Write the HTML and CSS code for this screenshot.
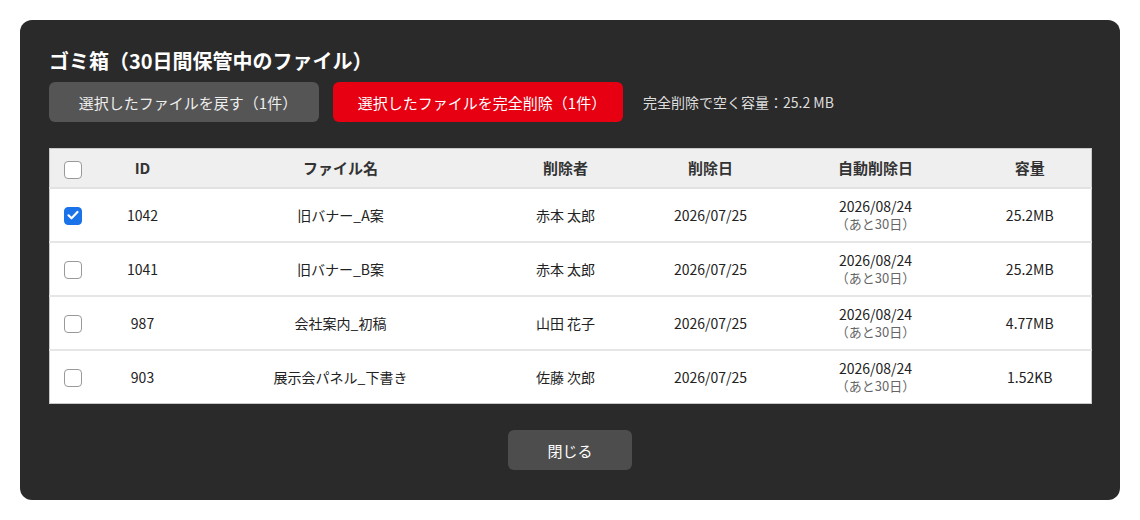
FILE: index.html
```html
<!DOCTYPE html>
<html lang="ja">
<head>
<meta charset="utf-8">
<link rel="stylesheet" href="styles.css">
</head>
<body>
<div class="panel">
  <h1 class="title">ゴミ箱（30日間保管中のファイル）</h1>
  <div class="actions">
    <button class="btn btn-restore">選択したファイルを戻す（1件）</button>
    <button class="btn btn-delete">選択したファイルを完全削除（1件）</button>
    <span class="free">完全削除で空く容量：25.2 MB</span>
  </div>
  <table class="grid">
    <colgroup>
      <col class="c-check"><col class="c-id"><col class="c-name"><col class="c-user"><col class="c-date"><col class="c-auto"><col class="c-size">
    </colgroup>
    <thead>
      <tr>
        <th><span class="cb"></span></th>
        <th>ID</th>
        <th>ファイル名</th>
        <th>削除者</th>
        <th>削除日</th>
        <th>自動削除日</th>
        <th>容量</th>
      </tr>
    </thead>
    <tbody>
      <tr>
        <td><span class="cb on"><svg viewBox="0 0 18 18" width="18" height="18"><path d="M4.5 9.3l3 3 6-6.3" fill="none" stroke="#fff" stroke-width="2.2" stroke-linecap="round" stroke-linejoin="round"/></svg></span></td>
        <td>1042</td>
        <td>旧バナー_A案</td>
        <td>赤本 太郎</td>
        <td>2026/07/25</td>
        <td><div class="d1">2026/08/24</div><div class="d2">（あと30日）</div></td>
        <td>25.2MB</td>
      </tr>
      <tr>
        <td><span class="cb"></span></td>
        <td>1041</td>
        <td>旧バナー_B案</td>
        <td>赤本 太郎</td>
        <td>2026/07/25</td>
        <td><div class="d1">2026/08/24</div><div class="d2">（あと30日）</div></td>
        <td>25.2MB</td>
      </tr>
      <tr>
        <td><span class="cb"></span></td>
        <td>987</td>
        <td>会社案内_初稿</td>
        <td>山田 花子</td>
        <td>2026/07/25</td>
        <td><div class="d1">2026/08/24</div><div class="d2">（あと30日）</div></td>
        <td>4.77MB</td>
      </tr>
      <tr>
        <td><span class="cb"></span></td>
        <td>903</td>
        <td>展示会パネル_下書き</td>
        <td>佐藤 次郎</td>
        <td>2026/07/25</td>
        <td><div class="d1">2026/08/24</div><div class="d2">（あと30日）</div></td>
        <td>1.52KB</td>
      </tr>
    </tbody>
  </table>
  <div class="footer">
    <button class="btn btn-close">閉じる</button>
  </div>
</div>
</body>
</html>
```
FILE: styles.css
```css
* { box-sizing: border-box; }
html, body { margin: 0; padding: 0; background: #fff; }
body {
  font-family: "Noto Sans CJK JP", "Noto Sans", sans-serif;
  padding: 20px;
}
.panel {
  width: 1100px;
  height: 480px;
  background: #2a2a2a;
  border-radius: 12px;
  padding: 26px 29px 30px 29px;
}
.title {
  margin: 0;
  color: #fff;
  font-size: 20px;
  font-weight: 700;
  line-height: 30px;
  height: 30px;
}
.actions {
  display: flex;
  align-items: center;
  margin-top: 6px;
  height: 40px;
}
.btn {
  font-family: inherit;
  border: none;
  border-radius: 6px;
  height: 40px;
  font-size: 15px;
  color: #fff;
  padding: 0;
  cursor: pointer;
}
.btn-restore { width: 270px; background: #555; color: #eee; padding-left: 8px; }
.btn-delete { width: 290px; background: #e60012; margin-left: 14px; padding-left: 8px; }
.free { margin-left: 20px; color: #ddd; font-size: 14px; }
.grid {
  margin-top: 26px;
  width: 1042px;
  border-collapse: collapse;
  table-layout: fixed;
  background: #fff;
  border: 1px solid #c8c8c8;
}
.c-check { width: 47px; }
.c-id { width: 92px; }
.c-name { width: 304px; }
.c-user { width: 146px; }
.c-date { width: 144px; }
.c-auto { width: 186px; }
.c-size { width: 123px; }
.grid th {
  height: 39px;
  background: #efefef;
  font-size: 15px;
  font-weight: 700;
  color: #333;
  text-align: center;
  border-bottom: 2px solid #e2e2e2;
  padding: 0;
}
.grid td {
  height: 54px;
  font-size: 14px;
  color: #222;
  text-align: center;
  padding: 0;
  border-bottom: 2px solid #e6e6e6;
  line-height: 18px;
}
.grid tbody tr:last-child td { border-bottom: none; }
.grid th:first-child, .grid td:first-child { text-align: left; padding-left: 14px; }
.cb {
  display: inline-block;
  width: 18px;
  height: 18px;
  border: 1.5px solid #999;
  border-radius: 4px;
  background: #fff;
  vertical-align: middle;
}
.cb.on { background: #1a73e8; border-color: #1a73e8; position: relative; }
.cb.on svg { position: absolute; left: -1.5px; top: -1.5px; }
.d1 { font-size: 14px; color: #222; }
.d2 { font-size: 13px; color: #666; }
.footer {
  display: flex;
  justify-content: center;
  margin-top: 26px;
}
.btn-close { width: 124px; background: #4d4d4d; font-size: 15px; }
```
